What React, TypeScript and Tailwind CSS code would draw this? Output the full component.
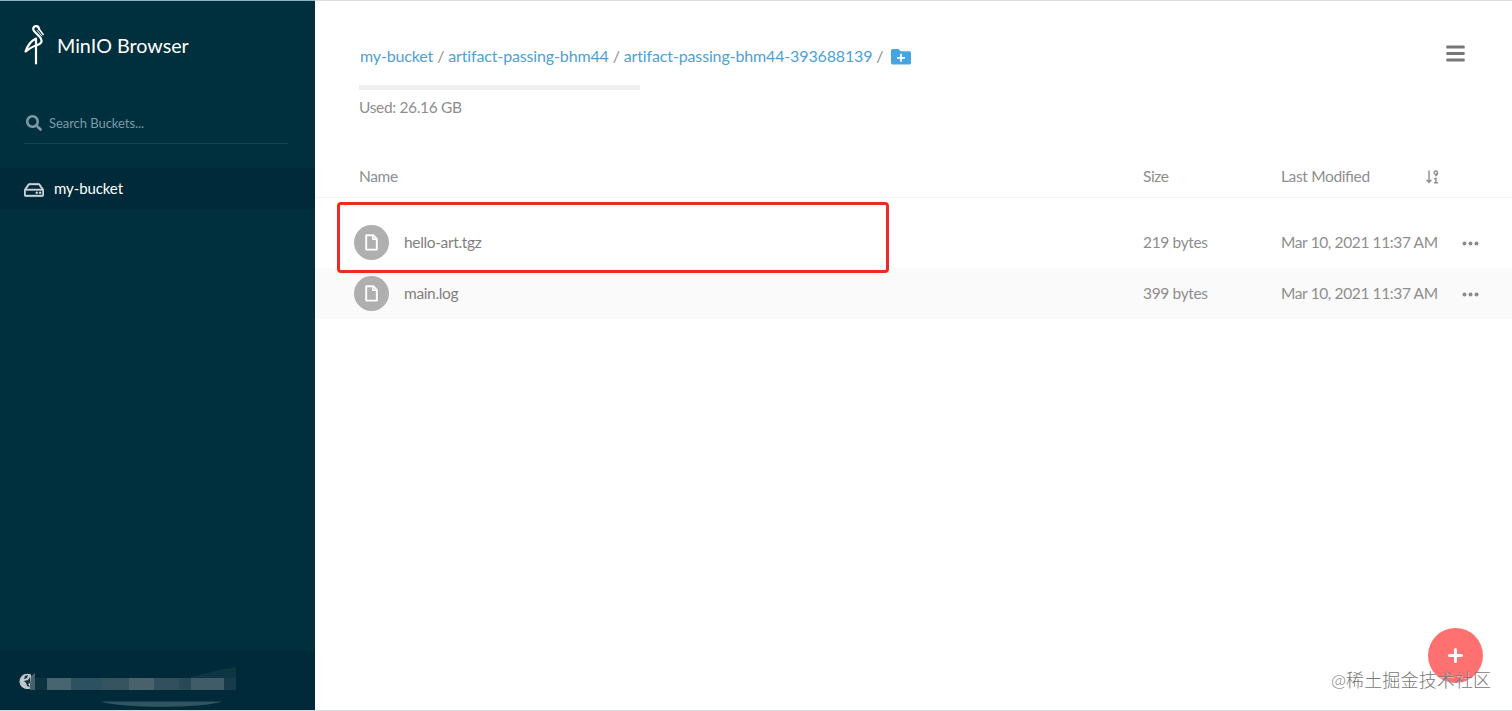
import React from "react";
import { FaSearch, FaRegHdd, FaBars } from "react-icons/fa";

const files = [
  { name: "hello-art.tgz", size: "219 bytes", modified: "Mar 10, 2021 11:37 AM" },
  { name: "main.log", size: "399 bytes", modified: "Mar 10, 2021 11:37 AM" },
];

function Logo() {
  return (
    <svg width="21" height="40" viewBox="0 0 21 40" fill="none" stroke="#fff" strokeWidth="2.200" strokeLinecap="round" strokeLinejoin="round">
      <path d="M15.200 4.200C14.600 1.600 12.800.9 11.400 1.200 9 1.700 8.500 4.200 10.200 6.200l5.200 5.300c2.200 2.300 2.600 4.400 1.700 6.100-.8 1.500-2.500 2.300-5 2.900" />
      <path d="m14.600 3.500 4.600 6" strokeWidth="1.500" />
      <path d="m13.300 5.500 4.500 5.500" strokeWidth="1" />
      <path d="M12 38.500V13.500C7 16 3.500 20.800 1.500 26.500c3.600-2.700 6.900-4.900 10.400-6" />
    </svg>
  );
}

function FolderPlus() {
  return (
    <svg width="20" height="16" viewBox="0 0 20 16">
      <path d="M1.800 0h5.700l2.200 2.200h8.600c1 0 1.700.7 1.700 1.700v9.800c0 1-.7 1.800-1.700 1.800H1.800C.8 15.500 0 14.700 0 13.700V1.800C0 .8.800 0 1.800 0Z" fill="#46a5e0" />
      <path d="M10 4.800v8M6 8.800h8" stroke="#fff" strokeWidth="1.800" />
    </svg>
  );
}

function SortIcon() {
  return (
    <svg width="13" height="14" viewBox="0 0 13 14" fill="none" stroke="#8e8e8e" strokeWidth="1.400">
      <path d="M3 .5v12M.6 9.800 3 12.500l2.400-2.700" />
      <circle cx="9.800" cy="2.700" r="1.700" />
      <path d="M11.500 2.500c0 1.800-.7 2.900-2.300 3.200M8.300 9l1.700-.7v4.500M8 12.800h4" />
    </svg>
  );
}

function FileIcon() {
  return (
    <span className="flex size-[35px] items-center justify-center rounded-full bg-[#afafaf]">
      <svg width="13" height="17" viewBox="0 0 13 17" fill="none" stroke="#fff" strokeWidth="1.900" strokeLinejoin="round">
        <path d="M1.200 1.200h7l3.600 3.800v10.600H1.200Z" />
        <path d="M7.800 1.200v4h4" strokeWidth="1.500" />
      </svg>
    </span>
  );
}

function Dots() {
  return (
    <svg className="mt-px" width="17" height="5" viewBox="0 0 17 5" fill="#8a8a8a">
      <circle cx="2.500" cy="2.500" r="2" />
      <circle cx="8.500" cy="2.500" r="2" />
      <circle cx="14.500" cy="2.500" r="2" />
    </svg>
  );
}

function HostInfo() {
  return (
    <svg className="block" width="315" height="59" viewBox="0 0 315 59">
      <path d="M31 23.500C25 21 19.500 25 19.500 30.500S25 39.500 31 37.500Z" fill="#bfc7ca" />
      <path d="m25 25 3-1-1 3-3 1Zm-1 5 4-1 2-3v6l-2 1 2 3-3-1-1-3Z" fill="#15323f" />
      <path d="M31 25l4-3v17h-5v-5Z" fill="#47616c" />
      <path d="M35 27h12v12H35Z" fill="#0d3341" />
      <path d="M47 27h24v12H47Z" fill="#476571" />
      <path d="M71 27h31v12H71Z" fill="#2c5160" />
      <path d="M102 27h27v12h-27Z" fill="#36545f" />
      <path d="M129 27h25v12h-25Z" fill="#49616a" />
      <path d="M154 27h25v12h-25Z" fill="#314f5c" />
      <path d="M179 27h12v12h-12Z" fill="#284a58" />
      <path d="M191 27h33v12h-33Z" fill="#3f5c68" />
      <path d="M224 27h12v12h-12Z" fill="#173b48" />
      <path d="m190 26 34-8 12-2v11h-46Z" fill="#0e3542" />
      <path d="M101 50.500h121c-19 7-102 7-121 0Z" fill="#31545f" />
    </svg>
  );
}

function Sidebar() {
  return (
    <aside className="flex w-[315px] shrink-0 flex-col border-t border-[#91b4c4] bg-[#002f3e]">
      <div className="flex items-start pt-6 pl-6">
        <Logo />
        <h1 className="mt-px ml-3 text-[19.700px] leading-10 whitespace-nowrap text-white">MinIO Browser</h1>
      </div>
      <div className="mt-[36px] ml-6 flex h-[42px] w-[264px] items-center border-b border-[#194451] pl-[2px]">
        <FaSearch className="size-4 text-[#7d9aa5]" />
        <span className="mt-[3px] ml-[7px] text-[13px] tracking-[-0.05px] text-[#7d9aa5]">Search Buckets...</span>
      </div>
      <div className="mt-6 flex h-[41px] items-center bg-[#002a39] pl-6">
        <FaRegHdd className="mt-0.5 size-5 stroke-[#c9d5d9] stroke-[10] text-[#c9d5d9]" />
        <span className="ml-2.5 text-[15px] tracking-[-0.1px] text-white">my-bucket</span>
      </div>
      <div className="mt-auto bg-[#002a39]">
        <HostInfo />
      </div>
    </aside>
  );
}

export default function App() {
  return (
    <div className="relative flex h-[711px] w-[1512px] overflow-hidden border-b border-[#d5dade] bg-white font-['Lato','Noto_Sans_CJK_SC',sans-serif] text-[15.500px] text-[#8e8e8e]">
      <Sidebar />
      <main className="min-w-0 flex-1 border-t border-[#dcdcde]">
        <header className="flex h-[155px] justify-between pt-[42px] pr-[46px] pl-11">
          <div>
            <div className="mt-px flex h-6 items-center pl-px text-[16px] tracking-[-0.140px] whitespace-pre">
              <span className="text-[#4d9fd6]">my-bucket</span>
              <span> / </span>
              <span className="text-[#4d9fd6]">artifact-passing-bhm44</span>
              <span> / </span>
              <span className="text-[#4d9fd6]">artifact-passing-bhm44-393688139</span>
              <span> / </span>
              <span className="mt-px ml-1"><FolderPlus /></span>
            </div>
            <div className="mt-[17px] h-[5px] w-[281px] bg-[#eeeeee]" />
            <div className="mt-[5px] leading-6 tracking-[-0.340px]">Used: 26.16 GB</div>
          </div>
          <FaBars className="size-[21px] text-[#777777]" />
        </header>
        <section className="tracking-[-0.350px]">
          <div className="flex h-[42px] items-center border-b border-[#f3f3f3] pl-11">
            <span className="w-[784px]">Name</span>
            <span className="w-[138px]">Size</span>
            <span className="w-[145px] [font-feature-settings:'liga']">Last Modified</span>
            <SortIcon />
          </div>
          <div className="pt-[19px]">
            {files.map((file) => (
              <div key={file.name} className="flex h-[51px] items-center pl-[39px] even:bg-[#fafafa]">
                <FileIcon />
                <span className="ml-[15px] w-[739px] text-[#7f7f7f]">{file.name}</span>
                <span className="w-[138px]">{file.size}</span>
                <span className="w-[181px] tracking-[-0.380px]">{file.modified}</span>
                <Dots />
              </div>
            ))}
          </div>
        </section>
      </main>
      <div className="absolute top-[202px] left-[337px] h-[71px] w-[552px] rounded-[4px] border-3 border-[#ee2b20]" />
      <button className="absolute top-[628px] left-[1428px] flex size-[55px] items-center justify-center rounded-full bg-[#ff7070]">
        <svg width="16" height="16" viewBox="0 0 16 16" stroke="#fff" strokeWidth="3" strokeLinecap="round">
          <path d="M7.500 1.500v12M1.500 7.500h12" />
        </svg>
      </button>
      <div className="absolute top-[667px] left-[1331px] text-[18px] leading-[26px] font-light tracking-[0.150px] whitespace-nowrap text-[#777777] [text-shadow:1px_1px_0_#ffffff80]">@稀土掘金技术社区</div>
    </div>
  );
}
